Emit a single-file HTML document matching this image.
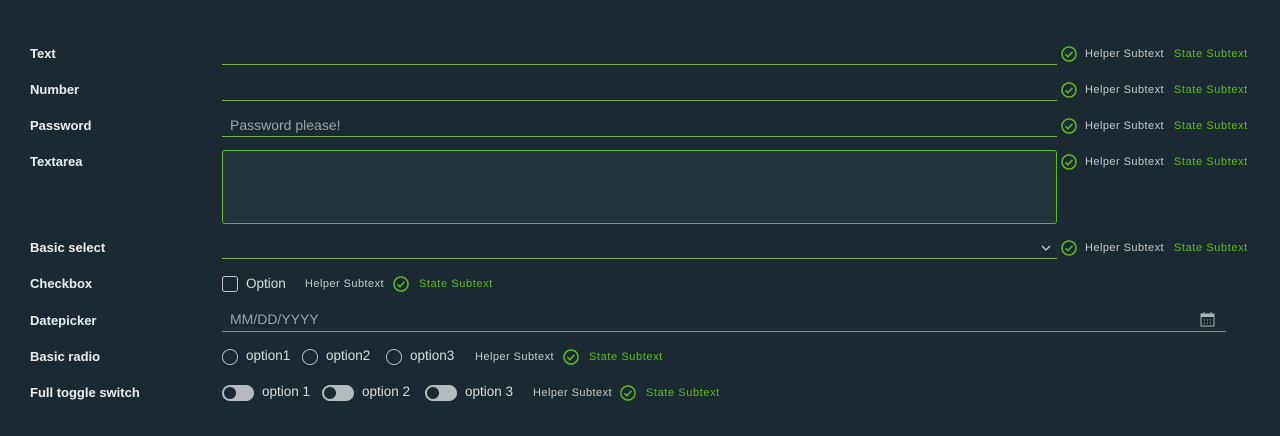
<!DOCTYPE html>
<html><head><style>
*{margin:0;padding:0;box-sizing:border-box}
body{width:1280px;height:436px;background:#1b2a32;font-family:"Liberation Sans",sans-serif;position:relative;overflow:hidden;color:#e8e8e8}
.a{position:absolute}
.lbl{left:30px;font-size:13px;font-weight:bold;color:#e9ecef}
.line{height:0;border-top:1px solid #7fae5a}
.help{font-size:11px;color:#c4c9cc;letter-spacing:.45px}
.st{font-size:11px;color:#5fba1e;letter-spacing:.6px}
.ph{font-size:14px;color:#9aa3a8}
.opt{font-size:13.5px;color:#d7dbdd}
.radio{width:16px;height:16px;border:1px solid #b6bcc0;border-radius:50%}
.tog{width:32px;height:16px;border-radius:8px;background:#b3babd}
.tog:after{content:"";position:absolute;left:2px;top:2px;width:12px;height:12px;border-radius:50%;background:#1b2a32}
</style></head><body>
<svg width="0" height="0" style="position:absolute"><defs><g id="ck"><circle cx="8" cy="8" r="7" fill="none" stroke="#5fba1e" stroke-width="1.5"/><path d="M4.5 8.3l2.4 2.4 4.6-4.8" fill="none" stroke="#5fba1e" stroke-width="1.5"/></g></defs></svg>

<div class="a lbl" style="top:46px">Text</div>
<div class="a line" style="left:222px;top:64px;width:835px"></div>
<div class="a lbl" style="top:82px">Number</div>
<div class="a line" style="left:222px;top:100px;width:835px"></div>
<div class="a lbl" style="top:118px">Password</div>
<div class="a ph" style="left:230px;top:117px">Password please!</div>
<div class="a line" style="left:222px;top:136px;width:835px"></div>
<div class="a lbl" style="top:154px">Textarea</div>
<div class="a" style="left:222px;top:150px;width:835px;height:74px;border:1px solid #5fba1e;border-radius:3px;background:#22343b"></div>
<div class="a lbl" style="top:240px">Basic select</div>
<svg class="a" style="left:1040px;top:243px" width="12" height="10"><path d="M2 3l4 4 4-4" fill="none" stroke="#c9ced1" stroke-width="1.3"/></svg>
<div class="a line" style="left:222px;top:258px;width:835px"></div>

<svg class="a" style="left:1061px;top:46px" width="16" height="16"><use href="#ck"/></svg>
<div class="a help" style="left:1085px;top:48px">Helper Subtext</div><div class="a st" style="left:1174px;top:48px">State Subtext</div>
<svg class="a" style="left:1061px;top:82px" width="16" height="16"><use href="#ck"/></svg>
<div class="a help" style="left:1085px;top:84px">Helper Subtext</div><div class="a st" style="left:1174px;top:84px">State Subtext</div>
<svg class="a" style="left:1061px;top:118px" width="16" height="16"><use href="#ck"/></svg>
<div class="a help" style="left:1085px;top:120px">Helper Subtext</div><div class="a st" style="left:1174px;top:120px">State Subtext</div>
<svg class="a" style="left:1061px;top:154px" width="16" height="16"><use href="#ck"/></svg>
<div class="a help" style="left:1085px;top:156px">Helper Subtext</div><div class="a st" style="left:1174px;top:156px">State Subtext</div>
<svg class="a" style="left:1061px;top:240px" width="16" height="16"><use href="#ck"/></svg>
<div class="a help" style="left:1085px;top:242px">Helper Subtext</div><div class="a st" style="left:1174px;top:242px">State Subtext</div>

<div class="a lbl" style="top:276px">Checkbox</div>
<div class="a" style="left:222px;top:276px;width:16px;height:16px;border:1px solid #c0c6c9;border-radius:3px"></div>
<div class="a opt" style="left:246px;top:276px">Option</div>
<div class="a help" style="left:305px;top:278px">Helper Subtext</div>
<svg class="a" style="left:393px;top:276px" width="16" height="16"><use href="#ck"/></svg>
<div class="a st" style="left:419px;top:278px">State Subtext</div>

<div class="a lbl" style="top:313px">Datepicker</div>
<div class="a ph" style="left:230px;top:311px">MM/DD/YYYY</div>
<svg class="a" style="left:1200px;top:312px" width="16" height="15"><rect x="1" y="2" width="13" height="12" fill="none" stroke="#aab1b5"/><rect x="1" y="2" width="13" height="3" fill="#aab1b5"/><path d="M4 0v3M11 0v3M4 8h1M7 8h1M10 8h1M4 11h1M7 11h1M10 11h1" stroke="#aab1b5"/></svg>
<div class="a" style="left:222px;top:331px;width:1004px;height:0;border-top:1px solid #5fba1e"></div>

<div class="a lbl" style="top:349px">Basic radio</div>
<div class="a radio" style="left:222px;top:349px"></div><div class="a opt" style="left:246px;top:348px">option1</div>
<div class="a radio" style="left:302px;top:349px"></div><div class="a opt" style="left:326px;top:348px">option2</div>
<div class="a radio" style="left:386px;top:349px"></div><div class="a opt" style="left:410px;top:348px">option3</div>
<div class="a help" style="left:475px;top:351px">Helper Subtext</div>
<svg class="a" style="left:563px;top:349px" width="16" height="16"><use href="#ck"/></svg>
<div class="a st" style="left:589px;top:351px">State Subtext</div>

<div class="a lbl" style="top:385px">Full toggle switch</div>
<div class="a tog" style="left:222px;top:385px"></div><div class="a opt" style="left:262px;top:384px">option 1</div>
<div class="a tog" style="left:322px;top:385px"></div><div class="a opt" style="left:362px;top:384px">option 2</div>
<div class="a tog" style="left:425px;top:385px"></div><div class="a opt" style="left:465px;top:384px">option 3</div>
<div class="a help" style="left:533px;top:387px">Helper Subtext</div>
<svg class="a" style="left:620px;top:385px" width="16" height="16"><use href="#ck"/></svg>
<div class="a st" style="left:646px;top:387px">State Subtext</div>
</body></html>
